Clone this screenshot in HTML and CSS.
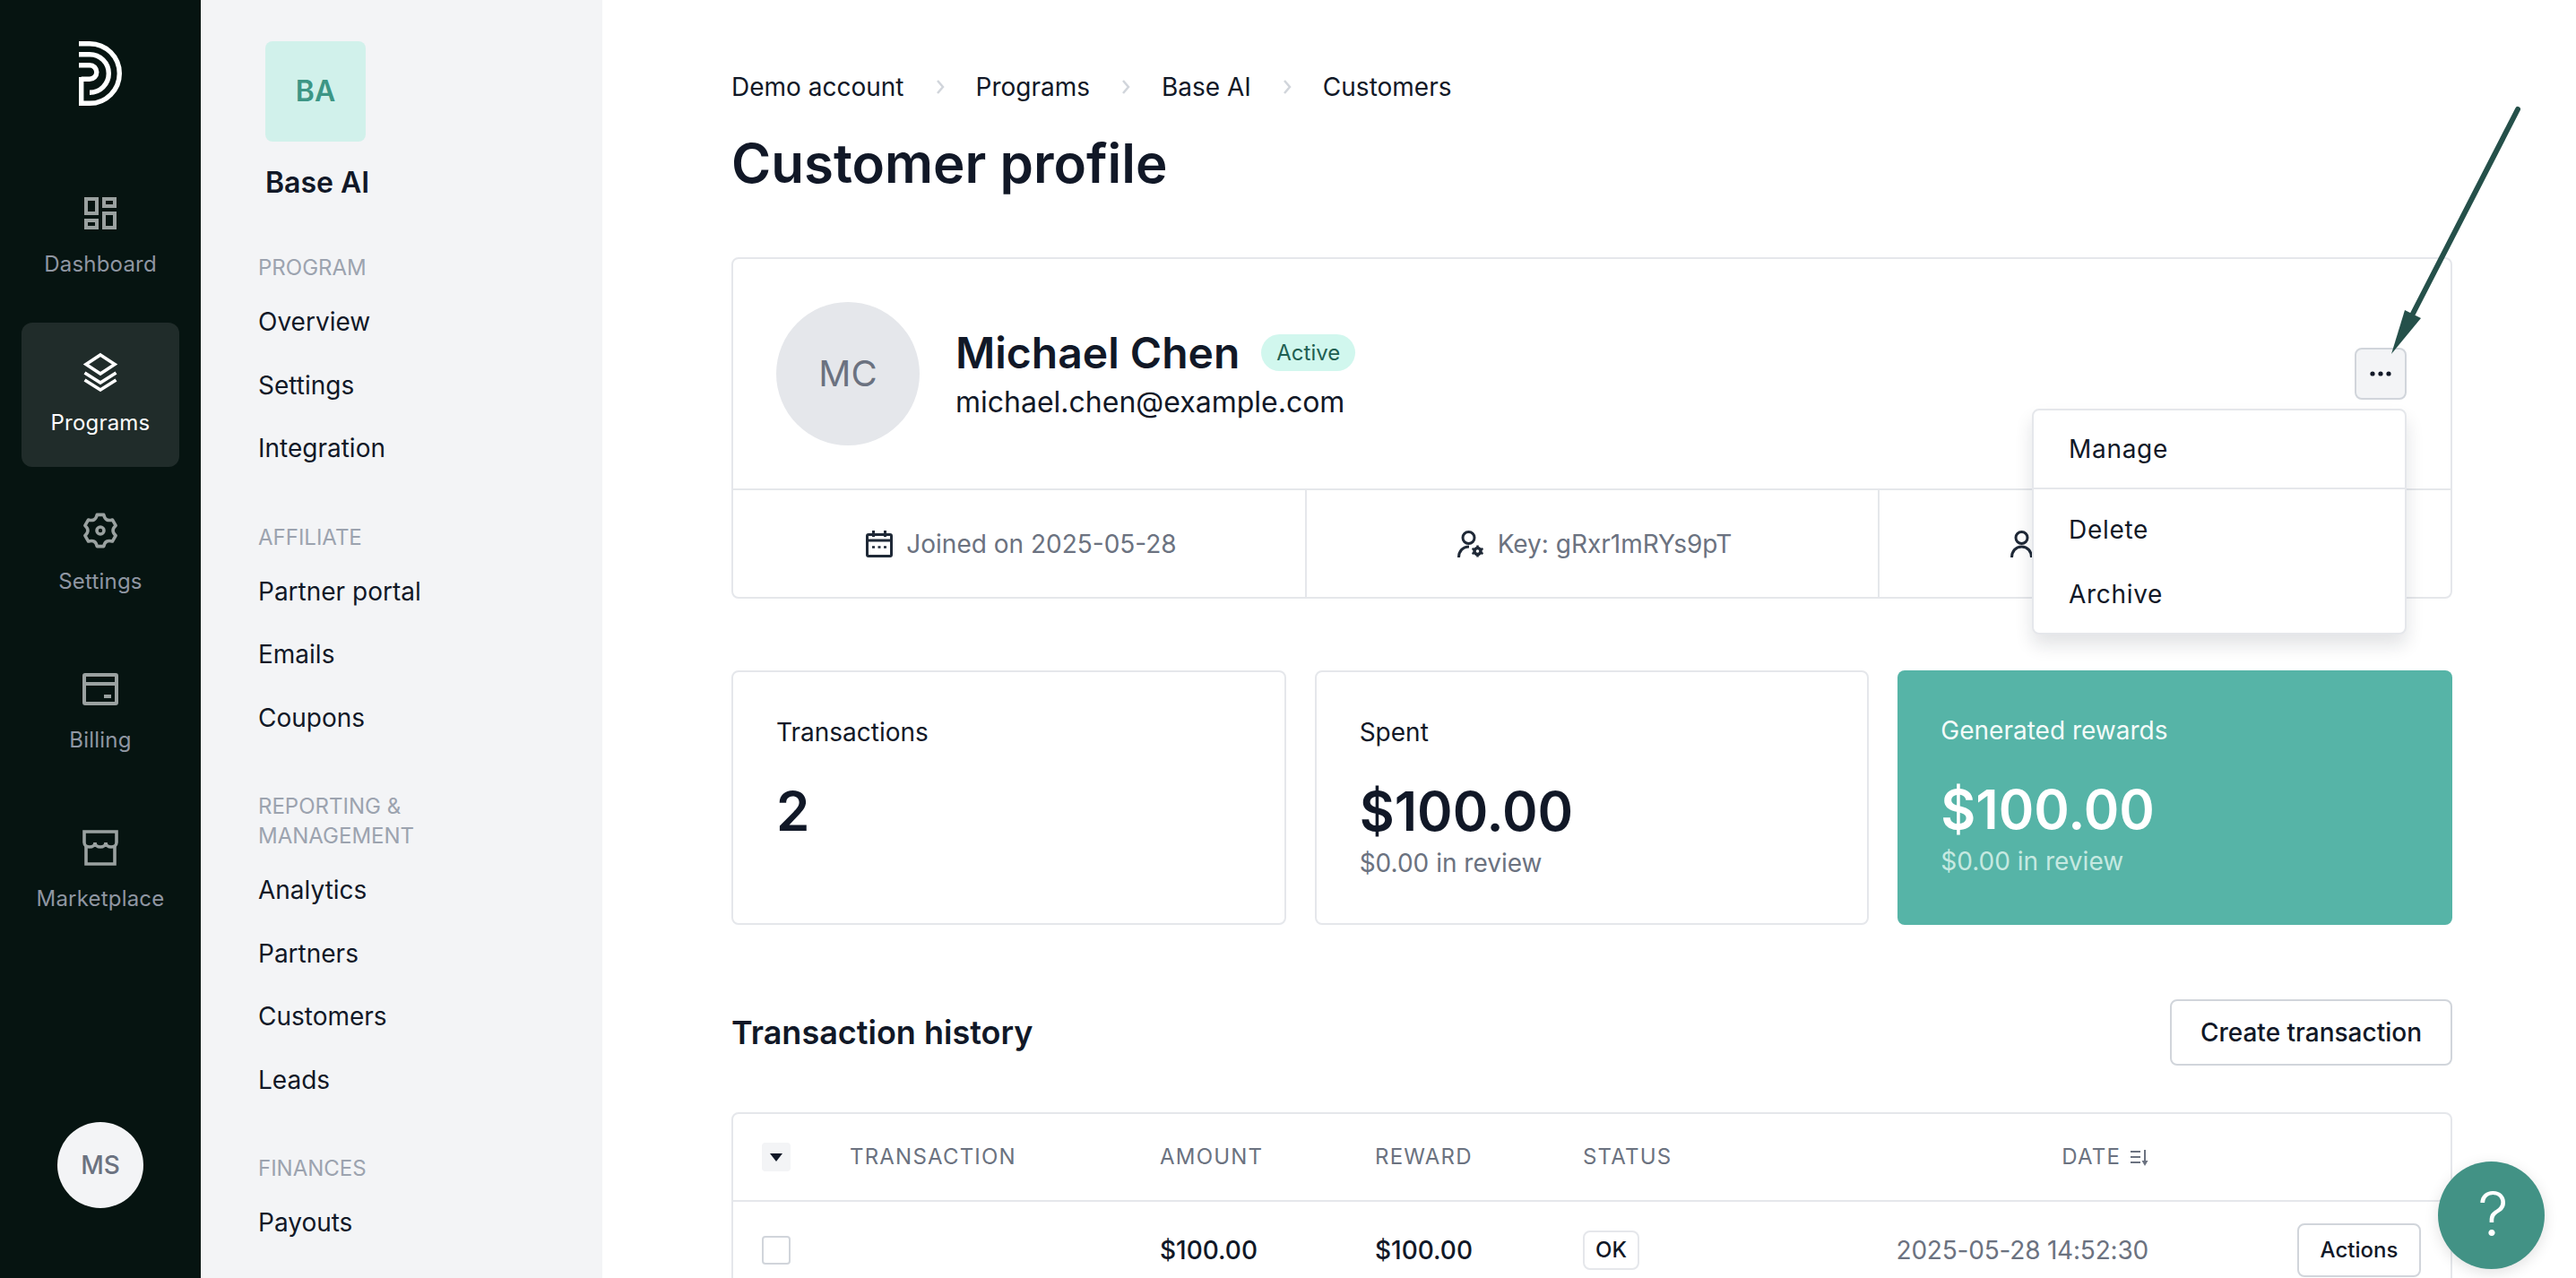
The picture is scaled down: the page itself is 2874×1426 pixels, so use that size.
FILE: index.html
```html
<!DOCTYPE html>
<html>
<head>
    <title>Customer profile</title>
    <link rel="stylesheet" href="styles.css">
</head>
<body>
<aside class="rail">
    <svg class="logo" viewBox="0 0 48 72" fill="none" stroke="#fff" stroke-width="5.4">
        <path d="M0 2.7H12A33.3 33.3 0 0 1 12 69.3H2.7V40"/>
        <path d="M0 14.7H12A21.3 21.3 0 0 1 12 57.3"/>
        <path d="M0 26.7H12A7.8 7.8 0 0 1 12 42.3H2.7"/>
    </svg>
    <nav class="rail-nav">
        <a class="rail-item">
            <svg class="rail-icon" viewBox="0 0 44 44" fill="none" stroke="currentColor" stroke-width="4">
                <rect x="6" y="6" width="12" height="16"/>
                <rect x="26" y="6" width="12" height="8"/>
                <rect x="6" y="30" width="12" height="8"/>
                <rect x="26" y="22" width="12" height="16"/>
            </svg>
            <span>Dashboard</span>
        </a>
        <a class="rail-item active">
            <svg class="rail-icon" viewBox="0 0 44 44" fill="none" stroke="currentColor" stroke-width="3.6">
                <path d="M22 3L38 13.5L22 24L6 13.5Z"/>
                <path d="M4.5 23L22 34L39.5 23"/>
                <path d="M4.5 31L22 42L39.5 31"/>
            </svg>
            <span>Programs</span>
        </a>
        <a class="rail-item">
            <svg class="rail-icon" viewBox="-22 -22 44 44" fill="none" stroke="currentColor" stroke-width="3.6" stroke-linejoin="round">
                <path d="M17.12 5.56L13.38 12.04Q5.5 9.53 3.74 17.6L-3.74 17.6Q-5.5 9.53 -13.38 12.04L-17.12 5.56Q-11 0 -17.12 -5.56L-13.38 -12.04Q-5.5 -9.53 -3.74 -17.6L3.74 -17.6Q5.5 -9.53 13.38 -12.04L17.12 -5.56Q11 0 17.12 5.56Z"/>
                <circle r="4"/>
            </svg>
            <span>Settings</span>
        </a>
        <a class="rail-item">
            <svg class="rail-icon" viewBox="0 0 44 44" fill="none" stroke="currentColor" stroke-width="4">
                <rect x="4" y="6" width="36" height="32" rx="1"/>
                <path d="M4 16H40"/>
                <path d="M26 30H34"/>
            </svg>
            <span>Billing</span>
        </a>
        <a class="rail-item">
            <svg class="rail-icon" viewBox="0 0 44 44" fill="none" stroke="currentColor" stroke-width="3.6">
                <path d="M4 16V4H40V16A6 5 0 0 1 28 16A6 5 0 0 1 16 16A6 5 0 0 1 4 16Z"/>
                <path d="M6 20V40H38V20"/>
            </svg>
            <span>Marketplace</span>
        </a>
    </nav>
    <div class="rail-avatar">MS</div>
</aside>

<aside class="subnav">
    <div class="brand-tile">BA</div>
    <div class="brand-name">Base AI</div>
    <div class="subnav-group">
        <div class="subnav-label">PROGRAM</div>
        <a class="subnav-link">Overview</a>
        <a class="subnav-link">Settings</a>
        <a class="subnav-link">Integration</a>
    </div>
    <div class="subnav-group">
        <div class="subnav-label">AFFILIATE</div>
        <a class="subnav-link">Partner portal</a>
        <a class="subnav-link">Emails</a>
        <a class="subnav-link">Coupons</a>
    </div>
    <div class="subnav-group">
        <div class="subnav-label">REPORTING &amp; MANAGEMENT</div>
        <a class="subnav-link">Analytics</a>
        <a class="subnav-link">Partners</a>
        <a class="subnav-link">Customers</a>
        <a class="subnav-link">Leads</a>
    </div>
    <div class="subnav-group">
        <div class="subnav-label">FINANCES</div>
        <a class="subnav-link">Payouts</a>
    </div>
</aside>

<main class="main">
    <div class="breadcrumb">
        <span>Demo account</span>
        <svg class="crumb-sep" viewBox="0 0 10 16"><path d="M2 1L8 8L2 15"/></svg>
        <span>Programs</span>
        <svg class="crumb-sep" viewBox="0 0 10 16"><path d="M2 1L8 8L2 15"/></svg>
        <span>Base AI</span>
        <svg class="crumb-sep" viewBox="0 0 10 16"><path d="M2 1L8 8L2 15"/></svg>
        <span>Customers</span>
    </div>
    <h1 class="page-title">Customer profile</h1>

    <section class="profile-card">
        <div class="profile-head">
            <div class="profile-avatar">MC</div>
            <div class="profile-text">
                <div class="profile-name">
                    <span>Michael Chen</span>
                    <span class="badge-active">Active</span>
                </div>
                <div class="profile-email">michael.chen@example.com</div>
            </div>
            <div class="profile-actions">
                <button class="dots-btn">
                    <svg width="24" height="6" viewBox="0 0 24 6" fill="#111827">
                        <circle cx="3" cy="3" r="2.6"/><circle cx="12" cy="3" r="2.6"/><circle cx="21" cy="3" r="2.6"/>
                    </svg>
                </button>
                <div class="menu">
                    <div class="menu-group first">
                        <div class="menu-item">Manage</div>
                    </div>
                    <div class="menu-group">
                        <div class="menu-item">Delete</div>
                        <div class="menu-item">Archive</div>
                    </div>
                </div>
            </div>
        </div>
        <div class="profile-info">
            <div class="info-cell">
                <svg class="info-icon" viewBox="0 0 30 30" fill="none" stroke="#1f2937" stroke-width="3">
                    <rect x="1.5" y="4.5" width="27" height="24" rx="1.5"/>
                    <path d="M1.5 11H28.5M8.5 0V7M21.5 0V7"/>
                    <path d="M7 18.5H10M13.5 18.5H16.5M20 18.5H23" stroke-width="2.5"/>
                </svg>
                <span>Joined on 2025-05-28</span>
            </div>
            <div class="info-cell">
                <svg class="info-icon" viewBox="0 0 30 30" fill="none" stroke="#1f2937" stroke-width="3">
                    <circle cx="12.5" cy="8" r="6.5"/>
                    <path d="M1.5 30C1.5 23 6 18 13 18"/>
                    <circle cx="22.5" cy="23" r="3.5" stroke-width="3.5"/>
                    <path d="M22.5 16.5V19M22.5 27V29.5M16.5 20L19 21.5M26 24.5L28.5 26M16.5 26L19 24.5M26 21.5L28.5 20" stroke-width="2.5"/>
                </svg>
                <span>Key: gRxr1mRYs9pT</span>
            </div>
            <div class="info-cell covered">
                <svg class="info-icon" viewBox="0 0 30 30" fill="none" stroke="#1f2937" stroke-width="3">
                    <circle cx="12.5" cy="8" r="6.5"/>
                    <path d="M1.5 30C1.5 23 6 18 12.5 18C19 18 23.5 23 23.5 30"/>
                </svg>
            </div>
        </div>
    </section>

    <section class="stats">
        <div class="stat-card">
            <div class="stat-label">Transactions</div>
            <div class="stat-value">2</div>
        </div>
        <div class="stat-card">
            <div class="stat-label">Spent</div>
            <div class="stat-value">$100.00</div>
            <div class="stat-sub">$0.00 in review</div>
        </div>
        <div class="stat-card highlight">
            <div class="stat-label">Generated rewards</div>
            <div class="stat-value">$100.00</div>
            <div class="stat-sub">$0.00 in review</div>
        </div>
    </section>

    <div class="section-head">
        <h2>Transaction history</h2>
        <button class="btn-outline">Create transaction</button>
    </div>

    <div class="table-wrap">
        <table class="tx-table">
            <colgroup>
                <col class="col-check"><col class="col-tx"><col class="col-amount"><col class="col-reward"><col class="col-status"><col class="col-date"><col>
            </colgroup>
            <thead>
                <tr>
                    <th class="cell-check">
                        <span class="check-all"><svg width="14" height="9" viewBox="0 0 14 9" fill="#111827"><path d="M0 0H14L7 9Z"/></svg></span>
                    </th>
                    <th>TRANSACTION</th>
                    <th>AMOUNT</th>
                    <th>REWARD</th>
                    <th>STATUS</th>
                    <th class="cell-date">
                        DATE
                        <svg class="sort-icon" width="20" height="18" viewBox="0 0 20 18" fill="none" stroke="#6b7280" stroke-width="2">
                            <path d="M0 2H11M0 8H11M0 14H11"/>
                            <path d="M16 0V13"/>
                            <path d="M12.5 12H19.5L16 18Z" fill="#6b7280" stroke="none"/>
                        </svg>
                    </th>
                    <th></th>
                </tr>
            </thead>
            <tbody>
                <tr>
                    <td class="cell-check"><span class="check-box"></span></td>
                    <td></td>
                    <td class="cell-money">$100.00</td>
                    <td class="cell-money">$100.00</td>
                    <td><span class="badge-ok">OK</span></td>
                    <td class="cell-date cell-grey">2025-05-28 14:52:30</td>
                    <td class="cell-actions"><button class="btn-small">Actions</button></td>
                </tr>
            </tbody>
        </table>
    </div>
</main>

<svg class="annotation" viewBox="0 0 2874 1426" fill="#25504a">
    <path d="M2809 122L2692 350" stroke="#25504a" stroke-width="6" stroke-linecap="round"/>
    <path d="M2683 346L2701 355L2668 395Z"/>
</svg>

<div class="help-bubble">?</div>
</body>
</html>
```

FILE: styles.css
```css
* {
    margin: 0;
    padding: 0;
    box-sizing: border-box;
}
html, body {
    height: 100%;
    overflow: hidden;
}
body {
    display: flex;
    position: relative;
    font-family: Inter, "Liberation Sans", sans-serif;
    font-size: 28px;
    line-height: 40px;
    color: #111827;
    background-color: #fff;
}
button {
    font-family: inherit;
    color: inherit;
    background: none;
}

/* dark icon rail */
.rail {
    width: 224px;
    flex-shrink: 0;
    display: flex;
    flex-direction: column;
    align-items: center;
    padding: 46px 24px 78px;
    background-color: #061411;
}
.logo {
    width: 48px;
    height: 72px;
    flex-shrink: 0;
    margin-bottom: 65px;
}
.rail-nav {
    display: flex;
    flex-direction: column;
    gap: 16px;
    width: 100%;
}
.rail-item {
    height: 161px;
    padding-top: 33px;
    display: flex;
    flex-direction: column;
    align-items: center;
    gap: 19px;
    border-radius: 12px;
    color: #9aa1a0;
    font-size: 24px;
    line-height: 32px;
    letter-spacing: 0.2px;
}
.rail-item span {
    color: #8f96a2;
}
.rail-item.active {
    background-color: #202c2a;
    color: #fff;
}
.rail-item.active span {
    color: #fff;
}
.rail-icon {
    width: 44px;
    height: 44px;
}
.rail-avatar {
    width: 96px;
    height: 96px;
    margin-top: auto;
    border-radius: 50%;
    background-color: #f3f4f6;
    color: #6b7280;
    font-size: 28px;
    font-weight: 500;
    display: flex;
    align-items: center;
    justify-content: center;
}

/* second column */
.subnav {
    width: 448px;
    flex-shrink: 0;
    padding: 46px 0 0 64px;
    background-color: #f3f4f6;
}
.brand-tile {
    width: 112px;
    height: 112px;
    margin-left: 8px;
    border-radius: 8px;
    background-color: #d1f1eb;
    color: #3d9685;
    font-size: 32px;
    font-weight: 600;
    display: flex;
    align-items: center;
    justify-content: center;
}
.brand-name {
    margin: 26px 0 0 8px;
    font-size: 32px;
    font-weight: 600;
}
.subnav-group {
    margin-bottom: 47px;
}
.brand-name + .subnav-group {
    margin-top: 58px;
}
.subnav-label {
    width: 220px;
    margin-bottom: 9px;
    font-size: 24px;
    line-height: 33px;
    color: #9ca3af;
}
.subnav-link {
    display: flex;
    align-items: center;
    height: 70.5px;
}

/* main area */
.main {
    flex: 1;
    min-width: 0;
    padding: 77px 138px 0 144px;
}
.breadcrumb {
    display: flex;
    align-items: center;
    gap: 35px;
}
.crumb-sep {
    width: 10px;
    height: 16px;
    fill: none;
    stroke: #d1d5db;
    stroke-width: 2.5;
}
.page-title {
    margin: 29px 0 69px;
    font-size: 60px;
    line-height: 72px;
    font-weight: 600;
}

.profile-card {
    border: 2px solid #e5e7eb;
    border-radius: 8px;
}
.profile-head {
    display: flex;
    align-items: center;
    padding: 48px 49px 48px 48px;
    border-bottom: 2px solid #e5e7eb;
}
.profile-avatar {
    width: 160px;
    height: 160px;
    border-radius: 50%;
    background-color: #e5e7eb;
    color: #6b7280;
    font-size: 40px;
    font-weight: 400;
    display: flex;
    align-items: center;
    justify-content: center;
    margin-right: 40px;
}
.profile-name {
    display: flex;
    align-items: center;
    gap: 24px;
    font-size: 48px;
    line-height: 56px;
    font-weight: 600;
}
.badge-active {
    height: 41px;
    padding: 0 17px;
    border-radius: 21px;
    background-color: #d1f7ee;
    color: #1f5f52;
    font-size: 24px;
    line-height: 42px;
    font-weight: 400;
}
.profile-email {
    margin-top: 7px;
    font-size: 32px;
}
.profile-actions {
    position: relative;
    margin-left: auto;
    height: 58px;
}
.dots-btn {
    width: 58px;
    height: 58px;
    border: 2px solid #d1d5db;
    border-radius: 8px;
    background-color: #f3f4f6;
    display: flex;
    align-items: center;
    justify-content: center;
}
.menu {
    position: absolute;
    top: 68px;
    right: 0;
    width: 418px;
    border: 2px solid #e5e7eb;
    border-radius: 8px;
    background-color: #fff;
    box-shadow: 0 12px 20px rgba(17, 24, 39, 0.12);
    z-index: 2;
}
.menu-group {
    padding: 9px 0 7px;
}
.menu-group.first {
    padding: 7px 0;
    border-bottom: 2px solid #e5e7eb;
}
.menu-item {
    height: 72px;
    padding-left: 39px;
    display: flex;
    align-items: center;
    letter-spacing: 0.7px;
}

.profile-info {
    display: grid;
    grid-template-columns: 640px 639px 1fr;
    height: 119px;
    color: #6b7280;
}
.info-cell {
    display: flex;
    align-items: center;
    justify-content: center;
    gap: 15px;
    padding-left: 5px;
    border-right: 2px solid #e5e7eb;
}
.info-cell.covered {
    justify-content: flex-start;
    padding-left: 146px;
    border-right: none;
}
.info-icon {
    width: 30px;
    height: 30px;
    flex-shrink: 0;
}

.stats {
    display: grid;
    grid-template-columns: repeat(3, 1fr);
    gap: 32px;
    margin-top: 80px;
}
.stat-card {
    height: 284px;
    padding: 47px 48px;
    border: 2px solid #e5e7eb;
    border-radius: 8px;
}
.stat-value {
    margin-top: 32px;
    font-size: 60px;
    line-height: 72px;
    font-weight: 600;
}
.stat-sub {
    margin-top: 2px;
    color: #6b7280;
}
.stat-card.highlight {
    border: none;
    background-color: #56b4a7;
    color: #fff;
}
.highlight .stat-label {
    color: #f3fbf9;
}
.highlight .stat-sub {
    color: #c6e9e1;
}

.section-head {
    display: flex;
    align-items: center;
    justify-content: space-between;
    margin: 83px 0 52px;
}
.section-head h2 {
    font-size: 36px;
    font-weight: 600;
}
.btn-outline {
    height: 74px;
    padding: 0 32px;
    border: 2px solid #d1d5db;
    border-radius: 8px;
    font-size: 28px;
    font-weight: 500;
}

.table-wrap {
    border: 2px solid #e5e7eb;
    border-radius: 8px;
}
.tx-table {
    width: 100%;
    table-layout: fixed;
    border-collapse: collapse;
}
.col-check { width: 130px; }
.col-tx { width: 346px; }
.col-amount { width: 240px; }
.col-reward { width: 232px; }
.col-status { width: 232px; }
.col-date { width: 399px; }
.tx-table th {
    height: 97px;
    border-bottom: 2px solid #e5e7eb;
    text-align: left;
    font-size: 24px;
    font-weight: 400;
    letter-spacing: 1.2px;
    color: #6b7280;
}
.tx-table td {
    height: 108px;
}
.cell-check {
    padding-left: 32px;
}
.check-all {
    width: 32px;
    height: 32px;
    border-radius: 4px;
    background-color: #f3f4f6;
    display: flex;
    align-items: center;
    justify-content: center;
}
.check-box {
    display: block;
    width: 32px;
    height: 32px;
    border: 2px solid #d1d5db;
    border-radius: 4px;
}
.tx-table .cell-date {
    text-align: right;
}
.sort-icon {
    margin-left: 3px;
    vertical-align: -2px;
}
.cell-money {
    font-weight: 500;
}
.cell-grey {
    color: #6b7280;
    letter-spacing: -0.2px;
}
.badge-ok {
    display: inline-flex;
    align-items: center;
    height: 44px;
    padding: 0 12px;
    border: 2px solid #e5e7eb;
    border-radius: 8px;
    font-size: 24px;
    font-weight: 500;
}
.cell-actions {
    padding-right: 33px;
    text-align: right;
}
.btn-small {
    height: 60px;
    width: 138px;
    border: 2px solid #d1d5db;
    border-radius: 8px;
    font-size: 24px;
    font-weight: 500;
}

.annotation {
    position: absolute;
    left: 0;
    top: 0;
    width: 2874px;
    height: 1426px;
    pointer-events: none;
    z-index: 3;
}
.help-bubble {
    position: fixed;
    right: 35px;
    bottom: 10px;
    width: 119px;
    height: 120px;
    padding: 0 0 4px 4px;
    border-radius: 50%;
    background-color: #429285;
    box-shadow: 0 4px 16px rgba(0, 0, 0, 0.12);
    color: #fff;
    font-size: 68px;
    font-weight: 300;
    display: flex;
    align-items: center;
    justify-content: center;
    z-index: 4;
}
```
